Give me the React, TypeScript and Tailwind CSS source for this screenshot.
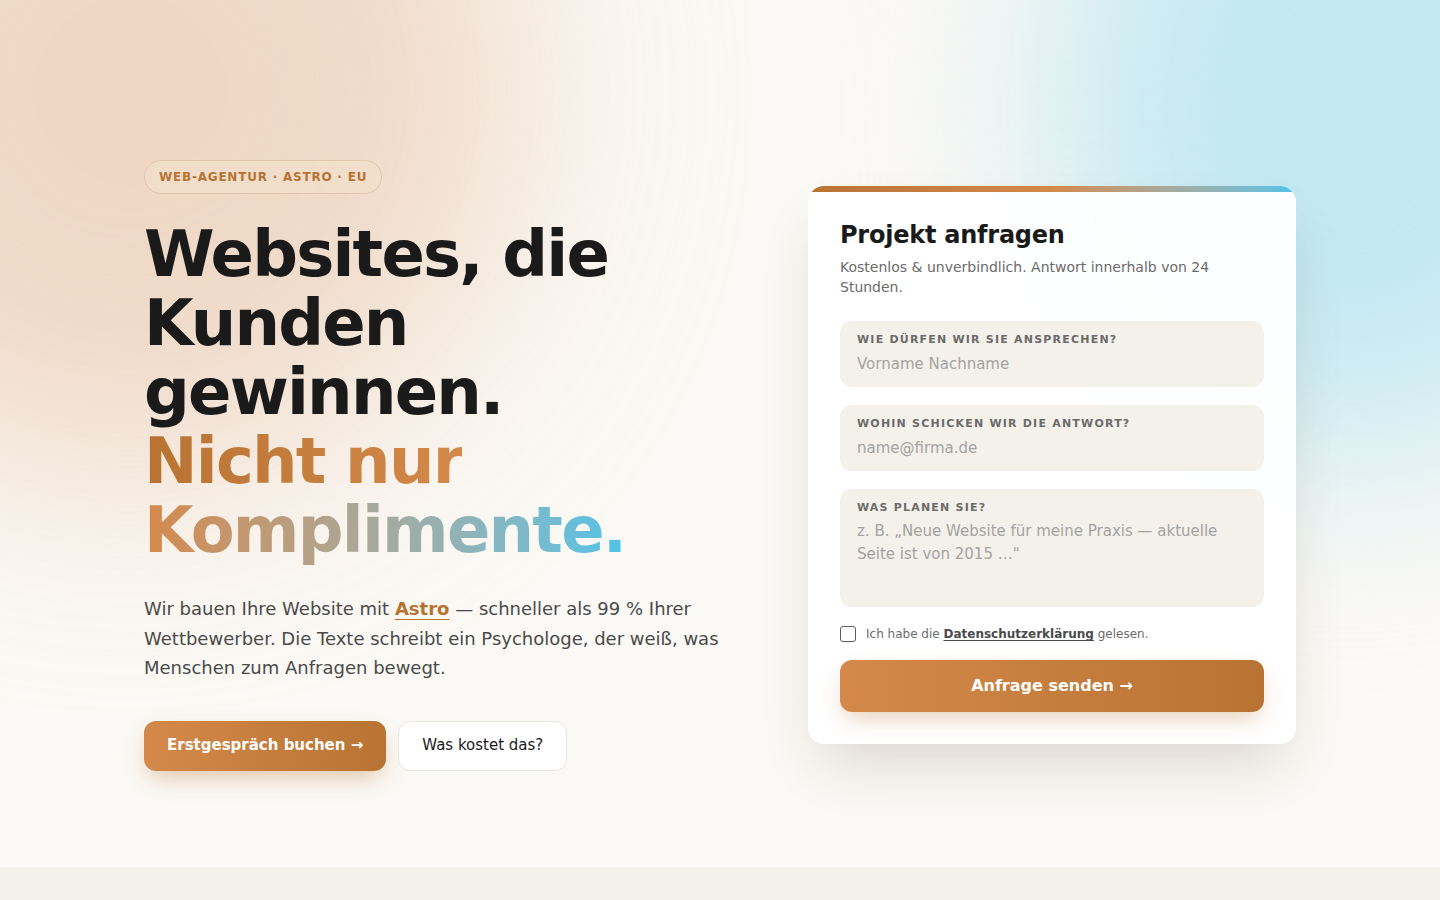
import { useState } from "react";

const font = "font-['DejaVu_Sans',_'Noto_Sans',_sans-serif]";

const Field = ({ label, placeholder, area }: { label: string; placeholder: string; area?: boolean }) => {
	return (
		<label className={"block rounded-xl bg-[#f4f1ea] px-[17px] pt-[11px] " + (area ? "pb-[18px]" : "pb-[11px]")}>
			<span className="block text-[11px] font-bold uppercase tracking-[0.11em] text-[#6b6b6b] leading-[16px]">{label}</span>
			{area ? (
				<textarea
					rows={3}
					placeholder={placeholder}
					className="mt-[4px] block w-full resize-none bg-transparent text-[15px] leading-[23px] text-[#1a1a1a] placeholder:text-[#a3a3a3] outline-none"
				/>
			) : (
				<input
					placeholder={placeholder}
					className="mt-[4px] block w-full bg-transparent text-[15px] leading-[24px] text-[#1a1a1a] placeholder:text-[#a3a3a3] outline-none"
				/>
			)}
		</label>
	);
};

const App = () => {
	const [checked, setChecked] = useState(false);

	return (
		<div className={`${font} min-h-screen bg-[#f4f1ea] text-[#1a1a1a]`}>
			<section className="relative overflow-hidden bg-[#fbf9f5]">
				{/* glows */}
				<div className="pointer-events-none absolute -left-[260px] -top-[300px] h-[780px] w-[780px] rounded-full bg-[#ecd0ba] opacity-80 blur-[110px]"></div>
				<div className="pointer-events-none absolute -right-[200px] -top-[240px] h-[700px] w-[580px] rounded-full bg-[#c2e8f2] blur-[100px]"></div>

				<div className="relative mx-auto grid max-w-6xl grid-cols-[1fr_488px] items-center gap-20 pt-[160px] pb-[96px]">
					<div>
						<span className="inline-block rounded-full border border-[#e3c6ab] bg-[#f1dfcc]/70 px-[14px] py-[8px] text-[12px] font-bold leading-[16px] tracking-[0.065em] text-[#b87333]">
							WEB-AGENTUR · ASTRO · EU
						</span>
						<h1 className="mt-[26px] text-[64px] font-bold leading-[69px] tracking-[-0.028em] text-[#1a1a1a]">
							Websites, die Kunden gewinnen.
							<br />
							<span className="bg-linear-to-r from-[#b87333] via-[#d4894a] via-40% to-[#4fc3e8] bg-clip-text text-transparent">
								Nicht nur Komplimente.
							</span>
						</h1>
						<p className="mt-[29px] max-w-[580px] text-[18px] leading-[29.5px] text-[#4a4a4a]">
							Wir bauen Ihre Website mit{" "}
							<a href="#" className="font-bold text-[#b87333] underline decoration-1 underline-offset-4">Astro</a>{" "}
							— schneller als 99 % Ihrer Wettbewerber. Die Texte schreibt ein Psychologe, der weiß, was Menschen zum Anfragen bewegt.
						</p>
						<div className="mt-[38px] flex gap-3">
							<button className="h-[50px] rounded-xl bg-linear-to-r from-[#d4894a] to-[#b87333] px-[23px] text-[15px] font-bold text-white shadow-[0_10px_24px_-6px_rgba(184,115,51,0.45)]">
								Erstgespräch buchen →
							</button>
							<button className="h-[50px] rounded-xl border border-[#ebe6dd] bg-white px-[23px] text-[15px] text-[#1a1a1a]">
								Was kostet das?
							</button>
						</div>
					</div>

					<div className="overflow-hidden rounded-2xl bg-white/95 shadow-[0_30px_60px_-15px_rgba(60,40,20,0.18)]">
						<div className="h-[6px] bg-linear-to-r from-[#b87333] via-[#d4894a] via-50% to-[#4fc3e8]"></div>
						<div className="px-8 pt-[27px] pb-8">
							<h2 className="text-[24px] font-bold leading-[32px] tracking-[-0.01em] text-[#1a1a1a]">Projekt anfragen</h2>
							<p className="mt-[6px] text-[14px] leading-[20px] text-[#6b6b6b]">
								Kostenlos &amp; unverbindlich. Antwort innerhalb von 24 Stunden.
							</p>
							<div className="mt-[24px] flex flex-col gap-[18px]">
								<Field label="Wie dürfen wir Sie ansprechen?" placeholder="Vorname Nachname" />
								<Field label="Wohin schicken wir die Antwort?" placeholder="name@firma.de" />
								<Field label="Was planen Sie?" placeholder={"z. B. „Neue Website für meine Praxis — aktuelle Seite ist von 2015 …\""} area />
							</div>
							<label className="mt-[18px] flex items-center gap-[10px] text-[12px] text-[#6b6b6b]">
								<input
									type="checkbox"
									checked={checked}
									onChange={() => setChecked(!checked)}
									className="h-[16px] w-[16px] appearance-none rounded-[3px] border border-[#5a5a5a] bg-white checked:bg-[#b87333]"
								/>
								<span>
									Ich habe die{" "}
									<a href="#" className="font-bold text-[#4a4a4a] underline underline-offset-2">Datenschutzerklärung</a>{" "}
									gelesen.
								</span>
							</label>
							<button className="mt-[17px] h-[52px] w-full rounded-xl bg-linear-to-r from-[#d4894a] to-[#b87333] text-[16px] font-bold text-white shadow-[0_10px_24px_-6px_rgba(184,115,51,0.4)]">
								Anfrage senden →
							</button>
						</div>
					</div>
				</div>
			</section>
			<div className="h-[34px] bg-[#f4f1ea]"></div>
		</div>
	);
};

export default App;
